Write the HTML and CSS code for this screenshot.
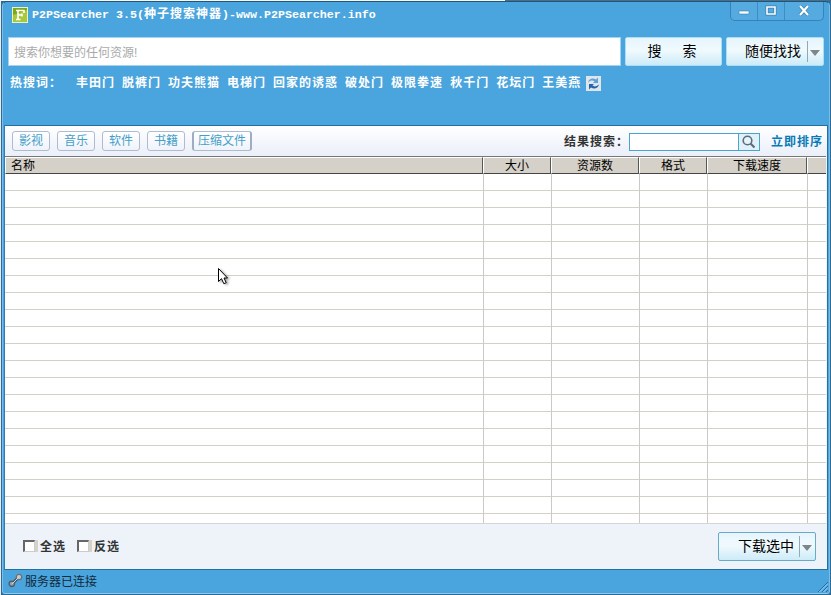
FILE: index.html
```
<!DOCTYPE html>
<html lang="zh-CN">
<head>
    <meta charset="UTF-8">
    <title>P2PSearcher 3.5</title>
    <link rel="stylesheet" href="styles.css">
</head>
<body>
    <div class="desktop-top"></div>
    <div class="window">
        <div class="title-bar">
            <svg class="app-icon" width="16" height="16" viewBox="0 0 16 16">
                <rect width="16" height="16" fill="#e9f3c4"/>
                <rect x="1" y="1" width="14" height="14" fill="#7fa81c"/>
                <path d="M1 15V8L15 3v12z" fill="#a9c83c"/>
                <path d="M4 3.500h8.500M6 3v10M4 12.500h4.500M6 8h4M12 3v3M10 6.500v3" stroke="#fff" stroke-width="1.600" fill="none"/>
            </svg>
            <h1><span class="latin">P2PSearcher 3.5(</span>种子搜索神器<span class="latin">)-www.P2PSearcher.info</span></h1>
            <div class="window-buttons">
                <button class="win-btn"><svg width="12" height="12"><rect x="1" y="6" width="10" height="3" fill="#fff" stroke="#3a7fb0" stroke-width=".6"/></svg></button>
                <button class="win-btn"><svg width="12" height="12"><path d="M2 2h8v7H2z" fill="none" stroke="#3a7fb0" stroke-width="3"/><path d="M2 2h8v7H2z" fill="none" stroke="#fff" stroke-width="1.6"/></svg></button>
                <button class="win-btn close"><svg width="12" height="12"><path d="M2 1l8 9M10 1l-8 9" stroke="#3a7fb0" stroke-width="3.4"/><path d="M2 1l8 9M10 1l-8 9" stroke="#fff" stroke-width="2.2"/></svg></button>
            </div>
        </div>

        <div class="search-row">
            <input type="text" class="search-input" placeholder="搜索你想要的任何资源!">
            <button class="big-btn search-btn"><span>搜</span><span>索</span></button>
            <button class="big-btn split-btn"><span class="split-label">随便找找</span><i class="arrow"></i></button>
        </div>

        <div class="hot-words">
            <span class="hot-label">热搜词：</span>
            <a>丰田门</a>
            <a>脱裤门</a>
            <a>功夫熊猫</a>
            <a>电梯门</a>
            <a>回家的诱惑</a>
            <a>破处门</a>
            <a>极限拳速</a>
            <a>秋千门</a>
            <a>花坛门</a>
            <a>王美燕</a>
            <svg class="refresh" width="15" height="15" viewBox="0 0 15 15">
                <rect width="15" height="15" fill="#dfe5e8"/>
                <path d="M2 6.500C3 2.500 7 1.500 10 3.500l2-2V7H7l1.600-1.600C6.500 4 4.500 4.500 2 6.500z" fill="#5aa2dd"/>
                <path d="M13 8.500c-1 4-5 5-8 3l-2 2V8h5l-1.600 1.600c2 1.400 4.100.9 6.600-1.100z" fill="#2563ae"/>
            </svg>
        </div>

        <div class="content">
            <div class="toolbar">
                <button class="tab">影视</button>
                <button class="tab">音乐</button>
                <button class="tab">软件</button>
                <button class="tab">书籍</button>
                <button class="tab wide">压缩文件</button>
                <div class="filter">
                    <label>结果搜索：</label>
                    <input type="text" class="filter-input">
                    <button class="filter-btn">
                        <svg width="16" height="16" viewBox="0 0 16 16"><circle cx="6.5" cy="6.5" r="4.3" fill="#e6f4fa" stroke="#5c6c78" stroke-width="1.6"/><path d="M9.5 9.5l4 4" stroke="#5c6c78" stroke-width="2.2"/></svg>
                    </button>
                    <a class="sort-link">立即排序</a>
                </div>
            </div>

            <div class="list">
                <div class="list-head">
                    <div class="th name">名称</div>
                    <div class="th">大小</div>
                    <div class="th">资源数</div>
                    <div class="th">格式</div>
                    <div class="th">下载速度</div>
                    <div class="th last"></div>
                </div>
                <div class="list-body">
                    <div class="col"></div>
                    <div class="col"></div>
                    <div class="col"></div>
                    <div class="col"></div>
                    <div class="col"></div>
                    <div class="col"></div>
                </div>
            </div>

            <div class="footer">
                <label class="check"><i class="box"></i>全选</label>
                <label class="check"><i class="box"></i>反选</label>
                <button class="big-btn split-btn download-btn"><span class="split-label">下载选中</span><i class="arrow"></i></button>
            </div>
        </div>

        <div class="status-bar">
            <svg width="15" height="15" viewBox="0 0 15 15">
                <path d="M4 11L11 4" stroke="#4d5358" stroke-width="3"/>
                <circle cx="3.8" cy="10.8" r="2.7" fill="#8fa3b0" stroke="#53595e" stroke-width="1.3"/>
                <circle cx="11" cy="4" r="2.7" fill="#c3ccd2" stroke="#6b7276" stroke-width="1.3"/>
                <path d="M4 11L11 4" stroke="#cfd6da" stroke-width="1"/>
            </svg>
            <span>服务器已连接</span>
            <svg class="grip" width="10" height="10"><path d="M0 10L10 0M4 10l6-6M8 10l2-2" stroke="#256fa6"/><path d="M1.5 10L10 1.5M5.5 10L10 5.5" stroke="#9bd0f2"/></svg>
        </div>
    </div>

    <svg class="cursor" width="14" height="20" viewBox="0 0 14 20">
        <path d="M1.5 1.5v13l3-2.8 2.300 5 2.400-1-2.200-4.700h3.500z" fill="#fff" stroke="#000"/>
    </svg>
</body>
</html>
```
FILE: styles.css
```
* {
    box-sizing: border-box;
}

body {
    margin: 0;
    width: 831px;
    height: 595px;
    overflow: hidden;
    padding: 0 1px 0 2px;
    background: linear-gradient(90deg, #e8ecee 1px, #2f6a96 1px);
    font-family: "Liberation Sans", "Noto Sans CJK SC", sans-serif;
    font-size: 12px;
}

button {
    padding: 0;
    font-family: inherit;
}

input {
    font-family: inherit;
    outline: none;
}

.desktop-top {
    height: 1px;
    margin-left: -2px;
    background: linear-gradient(90deg, #f5f8f8 505px, #47708f 505px);
}

.window {
    height: 593px;
    display: flex;
    flex-direction: column;
    background: #4aa4dd;
    border: 1px solid #235577;
    border-left-color: #79bde8;
    border-right-color: #79bde8;
    border-bottom-color: #8accf0;
    border-radius: 5px 5px 3px 3px;
}

.title-bar {
    height: 35px;
    display: flex;
    padding-left: 9px;
}

.app-icon {
    margin-top: 5px;
}

.title-bar h1 {
    margin: 3px 0 0 4px;
    font-size: 12px;
    line-height: 18px;
    letter-spacing: 1px;
    color: #fff;
    white-space: nowrap;
}

.latin {
    font-family: "Liberation Mono", monospace;
    font-size: 11.66px;
    letter-spacing: 0;
}

.window-buttons {
    display: flex;
    width: 94px;
    height: 19px;
    margin: 0 5px 0 auto;
    border: 1px solid #3583b8;
    border-top: 0;
    border-radius: 0 0 5px 5px;
    background: #55abe0;
}

.win-btn {
    width: 27px;
    border: 0;
    border-right: 1px solid #3d8cc2;
    background: none;
    line-height: 0;
}

.win-btn.close {
    flex: 1;
    border-right: 0;
}

.search-row {
    display: flex;
    height: 29px;
    padding-left: 5px;
}

.search-input {
    width: 613px;
    height: 29px;
    padding: 2px 5px 0;
    border: 1px solid #a5d2ee;
    font-size: 12px;
    background: #fff;
}

.search-input::placeholder {
    color: #aaa;
    opacity: 1;
}

.big-btn {
    height: 29px;
    border: 1px solid #a9def5;
    border-radius: 2px;
    background: linear-gradient(#e6f5fc, #f0fafd 45%, #cdebf8);
    font-size: 14px;
    color: #000;
}

.search-btn {
    width: 97px;
    margin-left: 4px;
    padding: 0 3px 4px 0;
    display: flex;
    justify-content: center;
    align-items: center;
    gap: 21px;
}

.split-btn {
    width: 98px;
    margin-left: 4px;
    display: flex;
    align-items: center;
}

.split-label {
    width: 81px;
    height: 21px;
    padding-left: 18px;
    line-height: 20px;
    border-right: 1px solid #8fa9b6;
    text-align: left;
    white-space: nowrap;
}

.arrow {
    margin: 3px 0 0 2px;
    border: 5px solid transparent;
    border-top: 6px solid #7c868b;
    border-bottom: 0;
}

.hot-words {
    height: 59px;
    display: flex;
    gap: 7px;
    padding: 8px 0 0 7px;
    font-weight: bold;
    line-height: 18px;
    letter-spacing: 1px;
    color: #fff;
    white-space: nowrap;
}

.hot-label {
    margin-right: 7px;
}

.refresh {
    margin: 2px 0 0 -2px;
}

.content {
    height: 445px;
    margin: 0 1px 0 1px;
    border: 1px solid #24719f;
    border-left-color: #2c7fb5;
    background: #eef3fa;
}

.toolbar {
    height: 31px;
    display: flex;
    padding: 5px 4px 0 7px;
    background: linear-gradient(#fff, #e9eef8);
}

.tab {
    width: 38px;
    height: 20px;
    margin-right: 7px;
    border: 1px solid #b0bbd0;
    border-radius: 3px;
    background: linear-gradient(#fff, #eff3fa);
    font-size: 12px;
    line-height: 17px;
    color: #459fc9;
}

.tab.wide {
    width: 60px;
    border-left: 2px solid #9fadc4;
    border-right: 2px solid #9fadc4;
}

.filter {
    display: flex;
    margin-left: auto;
    padding-top: 2px;
    font-weight: bold;
    line-height: 18px;
    letter-spacing: 1px;
    color: #333;
}

.filter-input {
    width: 110px;
    height: 18px;
    border: 1px solid #4aa3cf;
    background: #fff;
}

.filter-btn {
    width: 22px;
    height: 18px;
    margin-left: -1px;
    border: 1px solid #4aa3cf;
    background: #dff2fa;
    line-height: 0;
}

.sort-link {
    margin-left: 11px;
    line-height: 18px;
    color: #087ab5;
}

.list {
    height: 367px;
    margin-right: 1px;
    background: #fff;
}

.list-head,
.list-body {
    display: grid;
    grid-template-columns: 478px 68px 88px 68px 100px 1fr;
}

.list-head {
    height: 17px;
}

.th {
    height: 17px;
    border-top: 1px solid #fff;
    border-left: 1px solid #fff;
    border-right: 1px solid #555;
    border-bottom: 1px solid #444;
    background: #d5d0c8;
    box-shadow: 0 -1px #777;
    line-height: 17px;
    text-align: center;
    color: #000;
}

.th.name {
    padding-left: 5px;
    text-align: left;
}

.th.last {
    border-right: 0;
}

.list-body {
    height: 350px;
    border-bottom: 1px solid #d3d6d8;
    background: repeating-linear-gradient(#fff 0, #fff 16px, #d2d0c7 16px, #d2d0c7 17px);
}

.col + .col {
    border-left: 1px solid #cbcac4;
}

.footer {
    display: flex;
    padding: 8px 11px 0 18px;
}

.check {
    display: flex;
    width: 54px;
    height: 27px;
    align-items: center;
    font-weight: bold;
    letter-spacing: 1px;
    color: #333;
    white-space: nowrap;
}

.box {
    width: 12px;
    height: 12px;
    margin-right: 5px;
    border: 1px solid #ccc;
    border-top: 2px solid #666;
    border-left: 2px solid #666;
    background: #fff;
    box-shadow: 3px 0 #d5d2cc;
}

.download-btn {
    margin-left: auto;
    border-color: #67abc8;
}

.download-btn .split-label {
    padding-left: 19px;
}

.status-bar {
    flex: 1;
    display: flex;
    align-items: center;
    gap: 2px;
    padding: 0 0 2px 5px;
    color: #122a3a;
}

.grip {
    margin: auto 1px -1px auto;
}

/* mouse pointer over the list */
.cursor {
    position: absolute;
    left: 217px;
    top: 267px;
    filter: drop-shadow(2px 1px 1px rgba(0, 0, 0, .35));
}
```
